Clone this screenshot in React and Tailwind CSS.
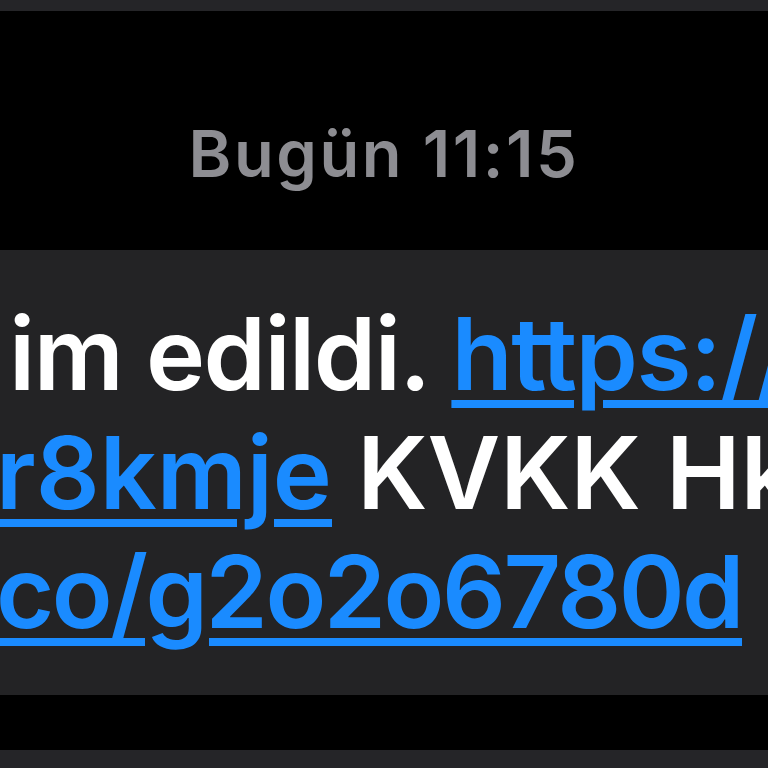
export default function App() {
  return (
    <div
      className="w-[768px] h-[768px] overflow-hidden bg-black flex flex-col"
      style={{ fontFamily: 'Inter, "Liberation Sans", sans-serif' }}
    >
      {/* previous bubble edge */}
      <div className="h-[11px] shrink-0 bg-[#252528]" />

      {/* timestamp */}
      <div className="h-[239px] shrink-0 flex justify-center pt-[104px]">
        <span className="text-[65px] leading-[78px] font-semibold tracking-[2.5px] text-[#8d8d92]">
          Bugün 11:15
        </span>
      </div>

      {/* message bubble */}
      <div className="h-[445px] shrink-0 bg-[#232325] overflow-hidden pt-[44px] text-[100px] leading-[119px] font-semibold text-white whitespace-nowrap">
        <div className="ml-[9px] tracking-[-1.5px]">
          im edildi.{' '}
          <span className="text-[#1a8bff] underline decoration-[8px] underline-offset-[10px]">https://</span>
        </div>
        <div className="ml-[-4px]">
          <span className="text-[#1a8bff] underline decoration-[8px] underline-offset-[10px]">r8kmje</span>{' '}
          KVKK Hk
        </div>
        <div className="ml-[-4px] tracking-[-2.5px]">
          <span className="text-[#1a8bff] underline decoration-[8px] underline-offset-[10px]">co/g2o2o6780d</span>
        </div>
      </div>

      <div className="h-[55px] shrink-0 bg-black" />
      <div className="flex-1 bg-[#252528]" />
    </div>
  );
}
